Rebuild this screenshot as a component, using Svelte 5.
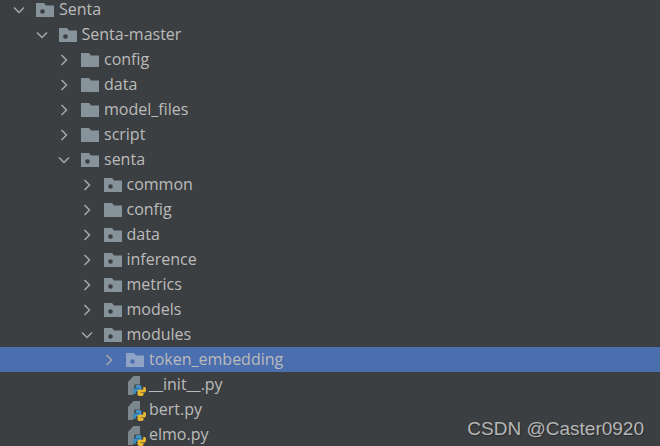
<script>
  const rows = [
    { level: 0, name: 'Senta', kind: 'module', open: true },
    { level: 1, name: 'Senta-master', kind: 'module', open: true },
    { level: 2, name: 'config', kind: 'folder' },
    { level: 2, name: 'data', kind: 'folder' },
    { level: 2, name: 'model_files', kind: 'folder' },
    { level: 2, name: 'script', kind: 'folder' },
    { level: 2, name: 'senta', kind: 'module', open: true },
    { level: 3, name: 'common', kind: 'module' },
    { level: 3, name: 'config', kind: 'folder' },
    { level: 3, name: 'data', kind: 'module' },
    { level: 3, name: 'inference', kind: 'module' },
    { level: 3, name: 'metrics', kind: 'module' },
    { level: 3, name: 'models', kind: 'module' },
    { level: 3, name: 'modules', kind: 'module', open: true },
    { level: 4, name: 'token_embedding', kind: 'module', selected: true },
    { level: 4, name: '__init__.py', kind: 'py' },
    { level: 4, name: 'bert.py', kind: 'py' },
    { level: 4, name: 'elmo.py', kind: 'py' }
  ];
  const snake = 'M9 9h2.500c1.200 0 2 .7 2 1.700v2.900c0 .9-.7 1.700-1.700 1.700H9c-.9 0-1.300.5-1.300 1.300V18H6.300C5.400 18 5 16.700 5 15.200S5.500 12.500 6.500 12.500h4v-.6h-3v-1.200C7.500 9.700 8 9 9 9Z';
</script>

<main class="tree">
  {#each rows as row}
    <div class="row level-{row.level}" class:selected={row.selected}>
      <span class="arrow">
        {#if row.kind !== 'py'}
          <svg width="12" height="12" viewBox="0 0 12 12">
            {#if row.open}
              <path d="M1 3.500 6 8.500 11 3.500" />
            {:else}
              <path d="M3.500 1 8.500 6 3.500 11" />
            {/if}
          </svg>
        {/if}
      </span>
      {#if row.kind === 'py'}
        <svg class="icon py" width="18" height="20" viewBox="0 0 18 20">
          <path class="page" d="M0 6 5.500 0H12V8.500H6.500L5 19H0Z" />
          <path class="blue" d={snake} />
          <path class="yellow" d={snake} transform="rotate(180 11.500 14.500)" />
        </svg>
      {:else}
        <svg class="icon" width="18" height="16" viewBox="0 0 18 16">
          <path class="folder" d="M0 1h8l2 2.500h8V15H0Z" />
          {#if row.kind === 'module'}
            <circle class="dot" cx="6.500" cy="9.500" r="2.300" />
          {/if}
        </svg>
      {/if}
      <span class="name">{row.name}</span>
    </div>
  {/each}
  <div class="mark">CSDN @Caster0920</div>
</main>

<style>
  :global(body) {
    margin: 0;
    background: #3c3f41;
  }
  .tree {
    position: relative;
    width: 660px;
    height: 446px;
    overflow: hidden;
    background: #3c3f41;
    color: #bbbbbb;
    font-family: "Open Sans", "Noto Sans", sans-serif;
    font-size: 16px;
  }
  .row {
    display: flex;
    align-items: center;
    height: 25px;
  }
  .row:first-child {
    height: 19px;
    margin-bottom: 3px;
  }
  .row.selected {
    background: #4b6eaf;
  }
  .level-0 { padding-left: 13px; }
  .level-1 { padding-left: 35.500px; }
  .level-2 { padding-left: 58px; }
  .level-3 { padding-left: 80.500px; }
  .level-4 { padding-left: 103px; }
  .arrow {
    width: 12px;
    height: 12px;
    margin-right: 11px;
    flex: none;
    display: flex;
  }
  .arrow path {
    fill: none;
    stroke: #a4a8aa;
    stroke-width: 1.500;
  }
  .icon {
    flex: none;
    margin-right: 5px;
  }
  .icon.py {
    margin: 3px 3px 0 2px;
  }
  .name {
    line-height: 17px;
  }
  .folder { fill: #87939a; }
  .dot { fill: #3c3f41; }
  .selected .folder { fill: #8fa3c6; }
  .selected .dot { fill: #4b6eaf; }
  .page { fill: #7c878e; }
  .blue { fill: #3d8fc4; }
  .yellow { fill: #e8b92e; }
  .mark {
    position: absolute;
    right: 16px;
    bottom: 6px;
    font-family: "Liberation Sans", sans-serif;
    font-size: 19px;
    color: #b4b6b7;
    text-shadow: 1px 1px 1px #2a2c2d;
  }
</style>
